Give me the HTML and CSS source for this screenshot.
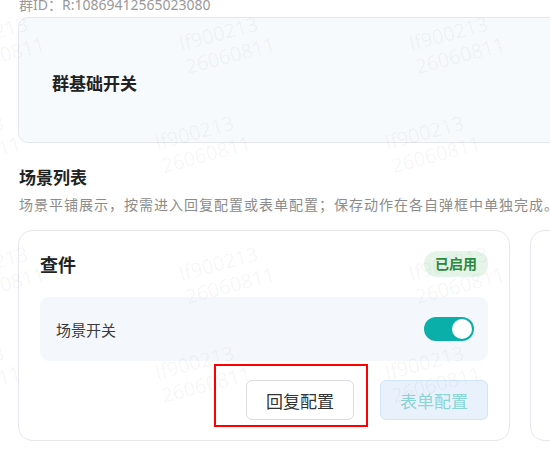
FILE: index.html
```html
<!DOCTYPE html>
<html lang="zh-CN">
<head>
  <meta charset="UTF-8">
  <meta name="viewport" content="width=device-width, initial-scale=1.0">
  <title>群配置</title>
  <link rel="stylesheet" href="styles.css">
</head>
<body class="body">
  <div class="page">
    <div class="group-id">群ID：R:10869412565023080</div>

    <section class="base-card">
      <h2 class="base-title">群基础开关</h2>
    </section>

    <div class="section-head">
      <h3 class="section-title">场景列表</h3>
      <p class="section-desc">场景平铺展示，按需进入回复配置或表单配置；保存动作在各自弹框中单独完成。</p>
    </div>

    <div class="scene-list">
      <div class="scene-card">
        <div class="scene-head">
          <span class="scene-name">查件</span>
          <span class="badge">已启用</span>
        </div>
        <div class="switch-row">
          <span class="switch-label">场景开关</span>
          <span class="switch on"></span>
        </div>
        <div class="scene-actions">
          <button class="btn btn-default">回复配置<span class="focus-mark"></span></button>
          <button class="btn btn-primary" disabled>表单配置</button>
        </div>
      </div>
      <div class="scene-card">
        <div class="scene-head">
          <span class="scene-name">催件</span>
          <span class="badge">已启用</span>
        </div>
        <div class="switch-row">
          <span class="switch-label">场景开关</span>
          <span class="switch on"></span>
        </div>
        <div class="scene-actions">
          <button class="btn btn-default">回复配置</button>
          <button class="btn btn-primary" disabled>表单配置</button>
        </div>
      </div>
    </div>

    <div class="watermarks" id="watermarks"></div>
  </div>

  <script>
    // водяной знак: два ряда со сдвигом, шаг 230px
    const layer = document.getElementById("watermarks");
    const rows = [
      { x: -3, y: 49 },
      { x: -27, y: 148 }
    ];
    for (let r = 0; r < 3; r++) {
      rows.forEach((row) => {
        for (let c = 0; c < 5; c++) {
          const mark = document.createElement("div");
          mark.className = "watermark";
          mark.innerHTML = "lf900213<br>26060811";
          mark.style.left = (row.x + c * 230) + "px";
          mark.style.top = (row.y + r * 230) + "px";
          layer.appendChild(mark);
        }
      });
    }
  </script>
</body>
</html>
```

FILE: styles.css
```css
.body {
  margin: 0;
  overflow: hidden;
  background: #ffffff;
  font-family: "Noto Sans", "Noto Sans CJK SC", sans-serif;
  color: #333333;
}
.page {
  position: relative;
  width: 1100px;
  padding: 0 18px;
  box-sizing: border-box;
}
.group-id {
  margin-top: -5px;
  padding-left: 1px;
  font-size: 14px;
  line-height: 20px;
  color: #999999;
}
.base-card {
  margin-top: 2px;
  height: 126px;
  padding: 4px 33px 0;
  box-sizing: border-box;
  display: flex;
  align-items: center;
  background: #f7fafd;
  border: 1px solid #e4e8ee;
  border-radius: 10px;
}
.base-title {
  margin: 0;
  font-size: 17px;
  font-weight: 700;
  color: #222222;
}
.section-head {
  padding: 23px 1px 0;
}
.section-title {
  margin: 0;
  font-size: 17px;
  line-height: 24px;
  font-weight: 700;
  color: #222222;
}
.section-desc {
  margin: 4px 0 0;
  font-size: 14px;
  line-height: 22px;
  letter-spacing: 1px;
  color: #8c8c8c;
  white-space: nowrap;
}
.scene-list {
  margin-top: 14px;
  display: grid;
  grid-template-columns: 492px 492px;
  gap: 20px;
}
.scene-card {
  padding: 20px 21px 20px;
  display: flex;
  flex-direction: column;
  gap: 20px;
  background: #ffffff;
  border: 1px solid #e6e8ef;
  border-radius: 14px;
}
.scene-head {
  display: flex;
  align-items: center;
  justify-content: space-between;
  height: 26px;
}
.scene-name {
  font-size: 18px;
  font-weight: 700;
  color: #222222;
}
.badge {
  padding: 0 11px;
  height: 26px;
  line-height: 26px;
  border-radius: 13px;
  background: #e5f4e8;
  color: #2b8a3e;
  font-size: 14px;
  font-weight: 700;
}
.switch-row {
  height: 64px;
  padding: 0 14px 0 16px;
  display: flex;
  align-items: center;
  justify-content: space-between;
  background: #f4f8fc;
  border-radius: 9px;
}
.switch-label {
  font-size: 15px;
  color: #3a3a3a;
}
.switch {
  position: relative;
  width: 50px;
  height: 24px;
  border-radius: 12px;
  background: #c9ced6;
}
.switch.on {
  background: #0aafa9;
}
.switch::after {
  content: "";
  position: absolute;
  top: 2px;
  left: 2px;
  width: 20px;
  height: 20px;
  border-radius: 50%;
  background: #ffffff;
}
.switch.on::after {
  left: 28px;
}
.scene-actions {
  margin-top: -1px;
  display: flex;
  justify-content: flex-end;
  gap: 26px;
}
.btn {
  position: relative;
  width: 108px;
  height: 40px;
  padding: 0;
  border-radius: 6px;
  font-family: "Noto Sans CJK SC", sans-serif;
  font-size: 17px;
  cursor: pointer;
}
.btn-default {
  background: #ffffff;
  border: 1px solid #d9dce2;
  color: #333333;
}
.btn-primary {
  background: #e9f2fc;
  border: 1px solid #d2e5f8;
  color: #8cd3d4;
  cursor: not-allowed;
}
/* рамка выделения вокруг кнопки */
.focus-mark {
  position: absolute;
  top: -17px;
  left: -33px;
  right: -15px;
  bottom: -8px;
  border: 2px solid #ff0000;
  pointer-events: none;
}
.watermarks {
  position: absolute;
  top: 0;
  left: 0;
  right: 0;
  bottom: 0;
  pointer-events: none;
  z-index: 5;
  overflow: hidden;
}
.watermark {
  position: absolute;
  transform: translate(-50%, -50%) rotate(-15deg);
  font-family: "Open Sans", sans-serif;
  font-size: 20px;
  line-height: 24px;
  color: rgba(0, 0, 0, 0.055);
  white-space: nowrap;
}
```
